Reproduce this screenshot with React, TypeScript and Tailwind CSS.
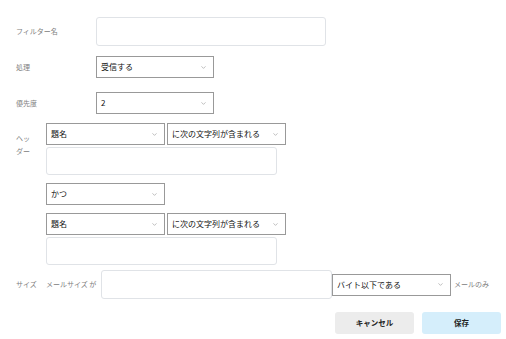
import { ChevronDown } from "lucide-react";

const font = "font-['Noto_Sans_CJK_JP','Noto_Sans',sans-serif]";

function Select({ value, className = "" }: { value: string; className?: string }) {
  return (
    <div
      className={`flex h-[22px] items-center justify-between border border-[#999] bg-white pl-[4px] pr-[6px] text-[8px] text-[#111] ${className}`}>
      <span>{value}</span>
      <ChevronDown className="h-[7px] w-[7px] text-[#777]" strokeWidth={1.6} />
    </div>
  );
}

function TextBox({ className = "" }: { className?: string }) {
  return <div className={`rounded-[3px] border border-[#e0e3e7] bg-white ${className}`} />;
}

function Label({ children, className = "" }: { children: React.ReactNode; className?: string }) {
  return <span className={`text-[7px] text-[#808080] ${className}`}>{children}</span>;
}

function HeaderCondition() {
  return (
    <div className="flex flex-col">
      <div className="flex gap-[2px]">
        <Select value="題名" className="w-[119px]" />
        <Select value="に次の文字列が含まれる" className="w-[119px]" />
      </div>
      <TextBox className="mt-[2px] h-[28px] w-[231px]" />
    </div>
  );
}

export default function App() {
  return (
    <div className={`h-[339px] w-[506px] bg-white ${font}`}>
      <div className="flex items-center pt-[17px]">
        <Label className="w-[96px] pl-[16px]">フィルター名</Label>
        <TextBox className="h-[29px] w-[230px]" />
      </div>

      <div className="mt-[10px] flex items-center">
        <Label className="w-[96px] pl-[16px]">処理</Label>
        <Select value="受信する" className="w-[118px]" />
      </div>

      <div className="mt-[14px] flex items-center">
        <Label className="w-[96px] pl-[16px]">優先度</Label>
        <Select value="2" className="w-[118px]" />
      </div>

      <div className="mt-[9px] flex">
        <div className="w-[46px] pl-[16px] pt-[9px]">
          <Label className="block w-[18px] leading-[13px]">ヘッダー</Label>
        </div>
        <div className="flex flex-col">
          <HeaderCondition />
          <Select value="かつ" className="mt-[8px] w-[119px]" />
          <div className="mt-[8px]">
            <HeaderCondition />
          </div>
        </div>
      </div>

      <div className="mt-[5px] flex items-center">
        <Label className="w-[30px] pl-[16px] box-content">サイズ</Label>
        <Label className="w-[55px]">メールサイズ が</Label>
        <TextBox className="h-[29px] w-[231px]" />
        <Select value="バイト以下である" className="w-[119px]" />
        <Label className="ml-[3px]">メールのみ</Label>
      </div>

      <div className="mt-[13px] flex justify-end gap-[8px] pr-[5px]">
        <button className="h-[22px] w-[79px] rounded-[3px] bg-[#ececec] text-[7.5px] font-bold text-[#222]">
          キャンセル
        </button>
        <button className="h-[22px] w-[79px] rounded-[3px] bg-[#d5eefb] text-[7.5px] font-bold text-[#222]">
          保存
        </button>
      </div>
    </div>
  );
}
